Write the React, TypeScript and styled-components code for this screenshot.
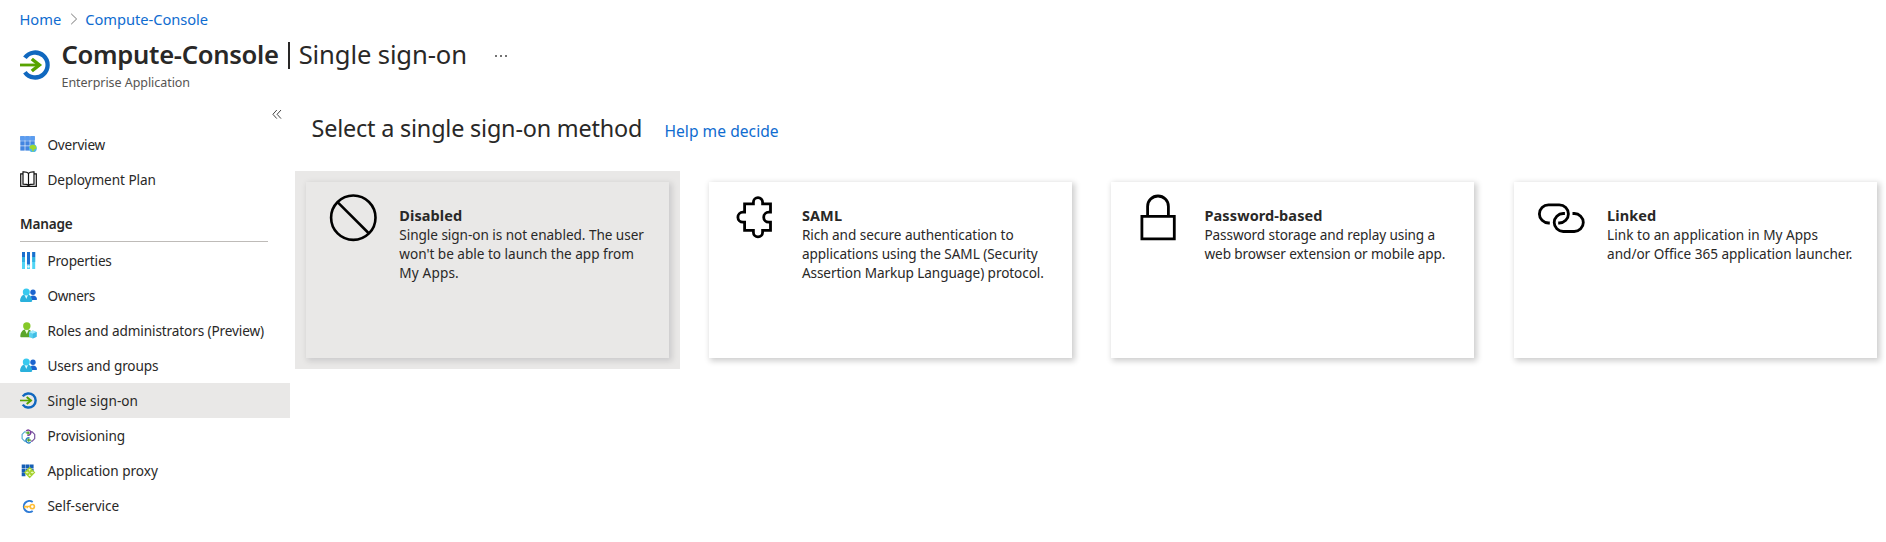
import React from "react";
import styled, { createGlobalStyle } from "styled-components";

const GlobalStyle = createGlobalStyle`
  * { box-sizing: border-box; }
  html, body { margin: 0; padding: 0; background: #fff; }
  body { overflow: hidden; font-family: "Noto Sans", "Open Sans", sans-serif; color: #292827; }
`;

const Page = styled.div`
  height: 542px;
  padding-top: 7px;
  overflow: hidden;
`;

const Breadcrumb = styled.nav`
  display: flex;
  align-items: center;
  height: 24px;
  padding-left: 19.5px;
  font-size: 14.7px;
  line-height: 24px;
  letter-spacing: -0.04px;
`;

const Link = styled.a`
  color: #0f6cd0;
  text-decoration: none;
  white-space: nowrap;
`;

const Separator = styled.svg`
  width: 8px;
  height: 12px;
  margin: 0 7.5px 0 8.5px;
`;

const Header = styled.header`
  display: flex;
  height: 69px;
  padding: 7px 0 0 20px;
`;

const HeaderIcon = styled.div`
  width: 30px;
  height: 30px;
  margin: 12px 11.5px 0 0;
`;

const Title = styled.h1`
  display: flex;
  align-items: center;
  margin: 0;
  height: 34px;
  font-size: 25.6px;
  line-height: 34px;
  font-weight: 400;
  letter-spacing: -0.12px;
  white-space: nowrap;
`;

const TitleName = styled.span`
  font-weight: 600;
  letter-spacing: -0.3px;
`;

const TitleBar = styled.span`
  width: 2px;
  height: 27px;
  margin: 0 8.5px 0 9.5px;
  background: #292827;
`;

const MoreDots = styled.span`
  display: flex;
  gap: 3px;
  margin: 2px 0 0 28px;
  i {
    width: 2px;
    height: 2px;
    border-radius: 1px;
    background: #444;
  }
`;

const Subtitle = styled.div`
  margin-top: 2px;
  font-size: 12.5px;
  line-height: 18px;
  letter-spacing: -0.05px;
  color: #565452;
`;

const Body = styled.div`
  display: flex;
`;

const Sidebar = styled.aside`
  flex: none;
  width: 290px;
`;

const CollapseRow = styled.div`
  display: flex;
  justify-content: flex-end;
  height: 26.8px;
  padding: 9px 8px 0 0;
`;

const NavItem = styled.div<{ $active?: boolean }>`
  display: flex;
  align-items: center;
  height: 35.1px;
  padding: 0.9px 0 0 20px;
  background: ${(p) => (p.$active ? "#e9e8e7" : "transparent")};
`;

const NavIcon = styled.span`
  display: flex;
  width: 17px;
  height: 17px;
  margin-right: 10.4px;
  svg {
    width: 17px;
    height: 17px;
  }
`;

const NavLabel = styled.span<{ $track: number }>`
  font-size: 13.6px;
  line-height: 20px;
  letter-spacing: ${(p) => p.$track}px;
  white-space: nowrap;
`;

const SectionHeading = styled.div`
  height: 45.6px;
  padding: 15px 22px 0 20px;
  font-size: 13.6px;
  font-weight: 600;
  line-height: 23px;
  letter-spacing: -0.18px;
`;

const SectionRule = styled.div`
  height: 1px;
  margin-top: 6px;
  background: #bebbb8;
`;

const Main = styled.main`
  flex: 1;
  min-width: 0;
  padding: 11px 0 0 5px;
`;

const MainHeading = styled.div`
  display: flex;
  align-items: baseline;
  height: 60px;
  padding-left: 16.5px;
  white-space: nowrap;
`;

const Heading = styled.h2`
  margin: 0;
  font-size: 23.4px;
  line-height: 34px;
  font-weight: 400;
  letter-spacing: -0.19px;
`;

const HelpLink = styled(Link)`
  margin-left: 22.2px;
  font-size: 15.6px;
  letter-spacing: 0.04px;
`;

const CardGrid = styled.div`
  display: flex;
  gap: 17.6px;
`;

const CardFrame = styled.div<{ $selected?: boolean }>`
  flex: none;
  width: 385px;
  height: 198px;
  padding: 11px;
  background: ${(p) => (p.$selected ? "#e9e8e7" : "transparent")};
`;

const Card = styled.div<{ $selected?: boolean }>`
  display: flex;
  height: 176px;
  background: ${(p) => (p.$selected ? "#e9e8e7" : "#fff")};
  box-shadow: 2px 2px 6px 1px ${(p) => (p.$selected ? "rgba(0, 0, 20, 0.13)" : "rgba(0, 0, 0, 0.2)")};
`;

const CardIcon = styled.div`
  flex: none;
  width: 93.3px;
  padding: 12px 0 0 23px;
  svg {
    display: block;
    width: 48px;
    height: 48px;
  }
`;

const CardText = styled.div`
  padding-top: 24px;
  font-size: 13.6px;
  line-height: 19.1px;
  white-space: nowrap;
`;

const CardTitle = styled.div`
  font-size: 14.5px;
  font-weight: 700;
  line-height: 19px;
  letter-spacing: 0.1px;
`;

const CardLine = styled.div<{ $track: number }>`
  letter-spacing: ${(p) => p.$track}px;
`;

const SignOnIcon = () => (
  <svg viewBox="0 0 30 30" width="30" height="30" fill="none">
    <path d="M4.9 7.8A12.5 12.5 0 1 1 4.9 22.2" stroke="#1068bf" strokeWidth="4.3" />
    <path d="M0 15H20" stroke="#57a300" strokeWidth="2.8" />
    <path d="M11.8 9L19.3 15L11.8 21" stroke="#57a300" strokeWidth="3.5" />
  </svg>
);

const OverviewIcon = () => (
  <svg viewBox="0 0 17 17">
    <g fill="#4285e0">
      {[0, 5, 10].map((y) => [0, 5, 10].map((x) => <rect key={`${x}-${y}`} x={x + 0.3} y={y + 0.2} width="4.4" height="4.4" />))}
    </g>
    <path d="M.3.2h4.4v4.4H.3zM5.3.2h4.4v4.4H5.3zM10.3.2h4.4v4.4h-4.4z" fill="#5a9cf0" />
    <circle cx="12.9" cy="12.2" r="3.9" fill="#50b8e8" />
    <path d="M9.600 10.600c1.200-2.200 4.200-2.600 5.900-.900 1.500 1.600.900 3.700-.4 3.400-1.400-.2-.8 1.800-2.200 2.700-1.400-1.100-.1-2.400-1.500-2.800-1.100-.2-2-1-1.800-2.400z" fill="#a0d82f" />
  </svg>
);

const BookIcon = () => (
  <svg viewBox="0 0 17 17" fill="none" stroke="#111" strokeWidth="1.2">
    <path d="M8.5 2.4v12.2M8.5 2.4C7.400 1 5.600.7 3 .8v12.400c2.600 0 4.400.1 5.500 1.300M8.500 2.400C9.600 1 11.400.7 14 .8v12.400c-2.600 0-4.400.1-5.500 1.300" />
    <path d="M3 2.800H.7v12.500h15.600V2.800H14" />
  </svg>
);

const PropertiesIcon = () => (
  <svg viewBox="0 0 17 17">
    <path d="M2 0h3v17H2zM7 12.500h3V17H7zM12.200 0h3v17h-3z" fill="#50d5f5" />
    <path d="M2 5h3v5H2zM12.200 5h3v5h-3z" fill="#31b3e2" />
    <path d="M2 0h3v5H2zM7 0h3v12.500H7zM12.200 0h3v5h-3z" fill="#1b6fce" />
    <circle cx="8.500" cy="14.500" r="1.200" fill="#d9f7ff" />
  </svg>
);

const PeopleIcon = () => (
  <svg viewBox="0 0 17 17">
    <circle cx="13" cy="5.300" r="2.700" fill="#1b64cf" />
    <path d="M9.500 13c0-2.600 1.400-4.400 3.500-4.400s4 1.700 4 3.700c0 .4-.3.7-.7.7z" fill="#1b64cf" />
    <path d="M0 13.800C.3 10 2.400 7.300 6.200 7.300s5.700 2.700 6 6.500c0 .7-.4 1.100-1.100 1.100H1.100C.4 14.900 0 14.500 0 13.800z" fill="#2ab1dc" />
    <path d="M4.300 7.600L6.300 12l1.900-4.400z" fill="#e8fbff" />
    <circle cx="6.300" cy="5" r="3.500" fill="#38c9ef" />
  </svg>
);

const RolesIcon = () => (
  <svg viewBox="0 0 17 17">
    <path d="M.3 14.300C.6 10 2.600 7.300 6.600 7.300s6 2.700 6.200 7c0 .6-.4 1-1 1H1.300c-.6 0-1-.4-1-1z" fill="#5aa52a" />
    <path d="M4.800 7.700l2 4.300 1.900-4.300z" fill="#f0ffe0" />
    <circle cx="6.800" cy="4" r="3.700" fill="#86c928" />
    <path d="M12.800 8.600l3.800 1.500v4.700l-3.800 1.700L9 14.800v-4.700z" fill="#5ad0ee" />
    <path d="M12.800 8.600l3.800 1.500-3.800 1.600L9 10.100z" fill="#a5ecfb" />
    <path d="M12.800 11.700l3.800-1.600v4.700l-3.800 1.700z" fill="#3ebce4" />
  </svg>
);

const ProvisioningIcon = () => (
  <svg viewBox="0 0 17 17" fill="none" strokeWidth="1.200">
    <path d="M5.800 3.800H4.600L2.100 6.400v4.200l2.500 2.600h1.200" stroke="#56acd2" />
    <path d="M10.800 3.800h1.400l2.500 2.600v4.200l-2.500 2.600h-1.400" stroke="#76549c" />
    <path d="M6.200 3.200A2.500 2.500 0 1 1 7.200 6.900" stroke="#783c9d" strokeWidth="1.400" />
    <path d="M10.600 13.800A2.500 2.500 0 1 1 9.600 10.100" stroke="#2681c4" strokeWidth="1.400" />
    <path d="M5.800 4.900h3M7.600 3.500l1.500 1.400-1.500 1.400M11 12.100H8M9.200 10.700l-1.500 1.400 1.500 1.400" stroke="#55a832" strokeWidth="1.300" />
  </svg>
);

const ProxyIcon = () => (
  <svg viewBox="0 0 17 17">
    <path d="M1.700 1.400h3.700v3.700H1.700zM5.800 1.400h3.700v3.700H5.800zM9.900 1.400h3.700v3.700H9.900zM1.700 5.500h3.700v3.700H1.700zM5.800 5.500h3.700v3.700H5.800zM9.900 5.500h3.700v3.700H9.900zM1.700 9.600h3.700v3.700H1.700z" fill="#165fb5" />
    <path d="M9.700 3.800l5.600 5.700-5.600 5.700L4 9.500z" fill="#a5d12b" />
    <path d="M9.700 6v2.300M9.700 10.700V13M6.200 9.500h2.300M10.900 9.500h2.300M8.700 7L9.700 6l1 1M8.700 12l1 1 1-1M7.200 8.500l-1 1 1 1M12.200 8.500l1 1-1 1" fill="none" stroke="#f4ffd9" strokeWidth=".8" />
  </svg>
);

const SelfServiceIcon = () => (
  <svg viewBox="0 0 17 17" fill="none">
    <path d="M12.700 4A5.600 5.600 0 1 0 12.700 13" stroke="#2e7bd6" strokeWidth="1.900" />
    <path d="M10.600 8.600H4.700v1.700M7.200 8.600v1.700" stroke="#ffbd35" strokeWidth="1.500" />
    <circle cx="12.300" cy="8.600" r="2.100" stroke="#ffbd35" strokeWidth="1.600" />
  </svg>
);

const CollapseIcon = () => (
  <svg width="10" height="11" viewBox="0 0 10 11" fill="none" stroke="#444" strokeWidth="1">
    <path d="M4.800 1L.9 5.300l3.900 4.300M9 1L5.100 5.300 9 9.600" />
  </svg>
);

const DisabledIcon = () => (
  <svg viewBox="0 0 48 48" fill="none" stroke="#000" strokeWidth="2.600">
    <circle cx="24.300" cy="23.700" r="22.200" />
    <path d="M8.800 8.400L39.500 39" />
  </svg>
);

const PuzzleIcon = () => (
  <svg viewBox="0 0 48 48" fill="none" stroke="#000" strokeWidth="2.800">
    <path d="M12.600 9.900H21.400V8.200a4.600 4.600 0 0 1 9.200 0V9.900H38.500V18.200H36.700a5 5 0 0 0 0 10H38.500V36.400H30.600V38.200a4.600 4.600 0 0 1-9.200 0V36.400H12.600V28.200H10.900a5 5 0 0 1 0-10H12.600Z" />
  </svg>
);

const LockIcon = () => (
  <svg viewBox="0 0 48 48" fill="none" stroke="#000" strokeWidth="2.800">
    <path d="M7.900 22.300H40.300V44.800H7.900Z" />
    <path d="M13.600 22.300V12.400a10.400 10.400 0 0 1 20.800 0V22.300" />
  </svg>
);

const ChainIcon = () => (
  <svg viewBox="0 0 48 48" fill="none" stroke="#000" strokeWidth="2.800">
    <g transform="translate(.6 .3)">
      <path d="M12.200 28.700H10.900a9 9 0 0 1 0-18.200H21.700a9 9 0 0 1 0 18.200H20.600" />
      <path d="M27.300 19.200H25.600a9 9 0 0 0 0 18H36.700a9 9 0 0 0 0-18H34.900" />
    </g>
  </svg>
);

type Item = { label: string; icon: React.ReactNode; track: number; active?: boolean };

const topItems: Item[] = [
  { label: "Overview", icon: <OverviewIcon />, track: -0.2 },
  { label: "Deployment Plan", icon: <BookIcon />, track: -0.05 },
];

const manageItems: Item[] = [
  { label: "Properties", icon: <PropertiesIcon />, track: -0.17 },
  { label: "Owners", icon: <PeopleIcon />, track: -0.3 },
  { label: "Roles and administrators (Preview)", icon: <RolesIcon />, track: -0.12 },
  { label: "Users and groups", icon: <PeopleIcon />, track: -0.12 },
  { label: "Single sign-on", icon: <SignOnIcon />, track: 0.03, active: true },
  { label: "Provisioning", icon: <ProvisioningIcon />, track: -0.1 },
  { label: "Application proxy", icon: <ProxyIcon />, track: -0.03 },
  { label: "Self-service", icon: <SelfServiceIcon />, track: -0.03 },
];

type Line = [string, number];
type Method = { title: string; icon: React.ReactNode; lines: Line[]; selected?: boolean };

const methods: Method[] = [
  {
    title: "Disabled",
    icon: <DisabledIcon />,
    selected: true,
    lines: [
      ["Single sign-on is not enabled. The user", -0.05],
      ["won't be able to launch the app from", -0.02],
      ["My Apps.", 0.15],
    ],
  },
  {
    title: "SAML",
    icon: <PuzzleIcon />,
    lines: [
      ["Rich and secure authentication to", -0.06],
      ["applications using the SAML (Security", -0.06],
      ["Assertion Markup Language) protocol.", -0.08],
    ],
  },
  {
    title: "Password-based",
    icon: <LockIcon />,
    lines: [
      ["Password storage and replay using a", -0.11],
      ["web browser extension or mobile app.", -0.1],
    ],
  },
  {
    title: "Linked",
    icon: <ChainIcon />,
    lines: [
      ["Link to an application in My Apps", 0.02],
      ["and/or Office 365 application launcher.", -0.03],
    ],
  },
];

const renderItem = (item: Item) => (
  <NavItem key={item.label} $active={item.active}>
    <NavIcon>{item.icon}</NavIcon>
    <NavLabel $track={item.track}>{item.label}</NavLabel>
  </NavItem>
);

export default function App() {
  return (
    <Page>
      <GlobalStyle />
      <Breadcrumb>
        <Link>Home</Link>
        <Separator viewBox="0 0 8 12" fill="none" stroke="#777" strokeWidth="1">
          <path d="M1.200.8L6.600 6l-5.400 5.200" />
        </Separator>
        <Link>Compute-Console</Link>
      </Breadcrumb>
      <Header>
        <HeaderIcon>
          <SignOnIcon />
        </HeaderIcon>
        <div>
          <Title>
            <TitleName>Compute-Console</TitleName>
            <TitleBar />
            <span>Single sign-on</span>
            <MoreDots>
              <i />
              <i />
              <i />
            </MoreDots>
          </Title>
          <Subtitle>Enterprise Application</Subtitle>
        </div>
      </Header>
      <Body>
        <Sidebar>
          <CollapseRow>
            <CollapseIcon />
          </CollapseRow>
          {topItems.map(renderItem)}
          <SectionHeading>
            Manage
            <SectionRule />
          </SectionHeading>
          {manageItems.map(renderItem)}
        </Sidebar>
        <Main>
          <MainHeading>
            <Heading>Select a single sign-on method</Heading>
            <HelpLink>Help me decide</HelpLink>
          </MainHeading>
          <CardGrid>
            {methods.map((m) => (
              <CardFrame key={m.title} $selected={m.selected}>
                <Card $selected={m.selected}>
                  <CardIcon>{m.icon}</CardIcon>
                  <CardText>
                    <CardTitle>{m.title}</CardTitle>
                    {m.lines.map(([text, track]) => (
                      <CardLine key={text} $track={track}>
                        {text}
                      </CardLine>
                    ))}
                  </CardText>
                </Card>
              </CardFrame>
            ))}
          </CardGrid>
        </Main>
      </Body>
    </Page>
  );
}
